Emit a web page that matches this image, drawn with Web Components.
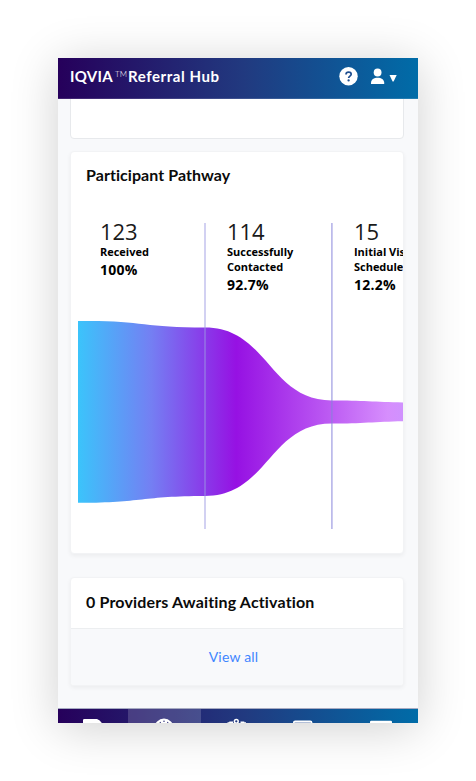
<!DOCTYPE html>
<html lang="en">
<head>
<meta charset="utf-8">
<title>Referral Hub</title>
<style>
html,body{margin:0;height:100%;background:#fff;overflow:hidden}
</style>
</head>
<body>
<referral-app></referral-app>
<script>
function define(name, html) {
  const t = document.createElement('template');
  t.innerHTML = html;
  customElements.define(name, class extends HTMLElement {
    constructor() {
      super();
      this.attachShadow({mode: 'open'}).appendChild(t.content.cloneNode(true));
    }
  });
}

define('app-header', `
<style>
:host{display:flex;align-items:center;box-sizing:border-box;height:41px;flex:none;padding:0 21px 4px 12px;background:linear-gradient(90deg,#26005b,#213a80 52%,#006ca8);color:#fff;border-bottom:1px solid #ffffff22}
.brand{font:700 15px/20px Lato,sans-serif;white-space:nowrap;flex:1;display:flex}
.a{letter-spacing:.3px;width:43px}
.tm{font:300 8px/12px Lato,sans-serif;padding-top:2px;margin-left:2px;width:13px}
.b{letter-spacing:.57px}
svg{display:block;flex:none;position:relative;top:1px}
</style>
<div class="brand"><span class="a">IQVIA</span><span class="tm">TM</span><span class="b">Referral Hub</span></div>
<svg width="58" height="20" viewBox="339 67 58 20">
<circle cx="348.5" cy="76.2" r="9.2" fill="#fff"/>
<path d="M346 74.4c0-3.1 5.2-3 5.2-.1 0 1.8-2.6 1.8-2.6 3.8" fill="none" stroke="#1d4d8f" stroke-width="1.7"/>
<circle cx="348.6" cy="80.4" r="1.15" fill="#1d4d8f"/>
<circle cx="377.6" cy="72.500" r="3.900" fill="#fff"/>
<path d="M371 84v-1.200c0-3.200 3-5.100 6.600-5.100s6.600 1.900 6.600 5.100V84z" fill="#fff"/>
<path d="M389.500 75h7.200L393.600 81.500h-1z" fill="#fff"/>
</svg>`);

define('hub-card', `
<style>
:host{display:flex;flex-direction:column;box-sizing:border-box;width:334px;background:#fff;border:1px solid #f2f3f5;border-radius:4px;box-shadow:0 2px 4px #0000000d;overflow:hidden;flex:none}
.title{font:700 16px/20px Lato,sans-serif;color:#0b0b0b;padding:0 15px;white-space:nowrap}
</style>
<div class="title"><slot name="title"></slot></div>
<slot></slot>`);

define('pathway-stage', `
<style>
:host{display:block;width:105px;flex:none;padding:1px 0 0 22px;font-family:"Open Sans","Noto Sans",sans-serif;color:#000}
.n{font-size:22px;line-height:30px;font-weight:400;letter-spacing:-.1px;color:#1a1a1a}
.l{font-size:11px;line-height:15px;font-weight:700;margin-top:-2px;letter-spacing:-.02px}
.p{font-size:14px;line-height:20px;font-weight:700;padding-top:1px;letter-spacing:.25px}
</style>
<div class="n"><slot name="count"></slot></div>
<div class="l"><slot></slot></div>
<div class="p"><slot name="rate"></slot></div>`);

define('pathway-chart', `
<style>
:host{display:grid;width:325px;height:314px;margin:30px 0 0 7px;overflow:hidden}
svg,.stages{grid-area:1/1}
.stages{display:flex;width:381px}
svg{display:block}
</style>
<svg width="325" height="314" viewBox="78 215 325 314">
<defs><linearGradient id="g" gradientUnits="userSpaceOnUse" x1="78" x2="411" y1="0" y2="0">
<stop offset="0" stop-color="#3bc4fb"/><stop offset=".22" stop-color="#747ff3"/><stop offset=".475" stop-color="#9611e3"/><stop offset=".76" stop-color="#bd5cf3"/><stop offset=".93" stop-color="#d68efd"/><stop offset="1" stop-color="#cd94ff"/>
</linearGradient></defs>
<path fill="url(#g)" d="M78 321C141 320 142 327.500 205 327.500C268 327.500 269 400.500 332 400.500C362 400.500 375 401.800 403 402.500V421.200C375 421.800 362 423.500 332 423.500C269 423.500 268 496 205 496C142 496 141 503 78 502.800Z"/>
<path d="M205 223V529" stroke="#9c98e2" stroke-opacity=".45" stroke-width="2"/>
<path d="M331.900 223V529" stroke="#8683da" stroke-opacity=".65" stroke-width="1.500"/>
</svg>
<div class="stages"><slot></slot></div>`);

define('view-all', `
<style>
:host{display:flex;align-items:center;justify-content:center;flex:1;padding-right:7px;background:#f8f9fb;border-top:1px solid #eceef0;font:400 14px/20px Lato,sans-serif;color:#3f86ff;letter-spacing:.2px}
</style><span><slot></slot></span>`);

define('bottom-nav', `
<style>
:host{display:grid;grid-template-columns:70px 73px 70px 72px 75px;height:15px;flex:none;box-sizing:border-box;background:linear-gradient(90deg,#26005b,#213a80 52%,#006ca8);border-top:1px solid #a7abc2;overflow:hidden}
div{overflow:hidden}
.on{background:#ffffff2b}
svg{display:block}
</style>
<div><svg width="70" height="14" viewBox="58 709 70 14"><path fill="#fff" d="M83 723v-2.800q0-1.300 1.300-1.300H97q3 .8 4.800 4.100z"/></svg></div>
<div class="on"><svg width="73" height="14" viewBox="128 709 73 14"><circle cx="164" cy="728.300" r="9.700" fill="#fff"/><g fill="#444285"><circle cx="164" cy="721.300" r=".8"/><circle cx="160.300" cy="722.400" r=".7"/><circle cx="167.700" cy="722.400" r=".7"/></g></svg></div>
<div><svg width="70" height="14" viewBox="201 709 70 14"><circle cx="236.300" cy="721.300" r="1.900" fill="none" stroke="#fff" stroke-width="1.500"/><path stroke="#fff" stroke-width="1.500" d="M229.300 722.200h3.800M240.500 722.200h3.800M227.500 723h2M244 723h2"/></svg></div>
<div><svg width="72" height="14" viewBox="271 709 72 14"><rect x="293.700" y="721.300" width="18" height="12" rx="1.500" fill="#b4c0d8" stroke="#fff" stroke-width="1.500"/></svg></div>
<div><svg width="75" height="14" viewBox="343 709 75 14"><rect x="370" y="720.700" width="22" height="12" rx="1.200" fill="#fff"/></svg></div>`);

define('referral-app', `
<style>
:host{display:flex;flex-direction:column;width:360px;height:665px;margin:58px;background:#f8f9fb;box-shadow:0 5px 45px rgba(0,0,0,.19)}
main{flex:1;overflow:hidden;display:flex;flex-direction:column;padding-left:12px;min-height:0}
.first{height:44px;margin-top:-4px;border-color:#e7e9ec;box-shadow:none}
.path{height:403px;margin-top:12px;padding-top:13px}
.prov{height:109px;margin-top:23px;padding-top:14px}
.prov view-all{margin-top:16px}
.path [slot=title]{letter-spacing:.06px}
.prov [slot=title]{letter-spacing:.16px}
</style>
<app-header></app-header>
<main>
<hub-card class="first"></hub-card>
<hub-card class="path"><span slot="title">Participant Pathway</span>
<pathway-chart>
<pathway-stage><span slot="count">123</span>Received<span slot="rate">100%</span></pathway-stage>
<pathway-stage><span slot="count">114</span>Successfully<br>Contacted<span slot="rate">92.7%</span></pathway-stage>
<pathway-stage><span slot="count">15</span>Initial Visit<br>Scheduled<span slot="rate">12.2%</span></pathway-stage>
</pathway-chart></hub-card>
<hub-card class="prov"><span slot="title">0 Providers Awaiting Activation</span><view-all>View all</view-all></hub-card>
</main>
<bottom-nav></bottom-nav>`);
</script>
</body>
</html>
